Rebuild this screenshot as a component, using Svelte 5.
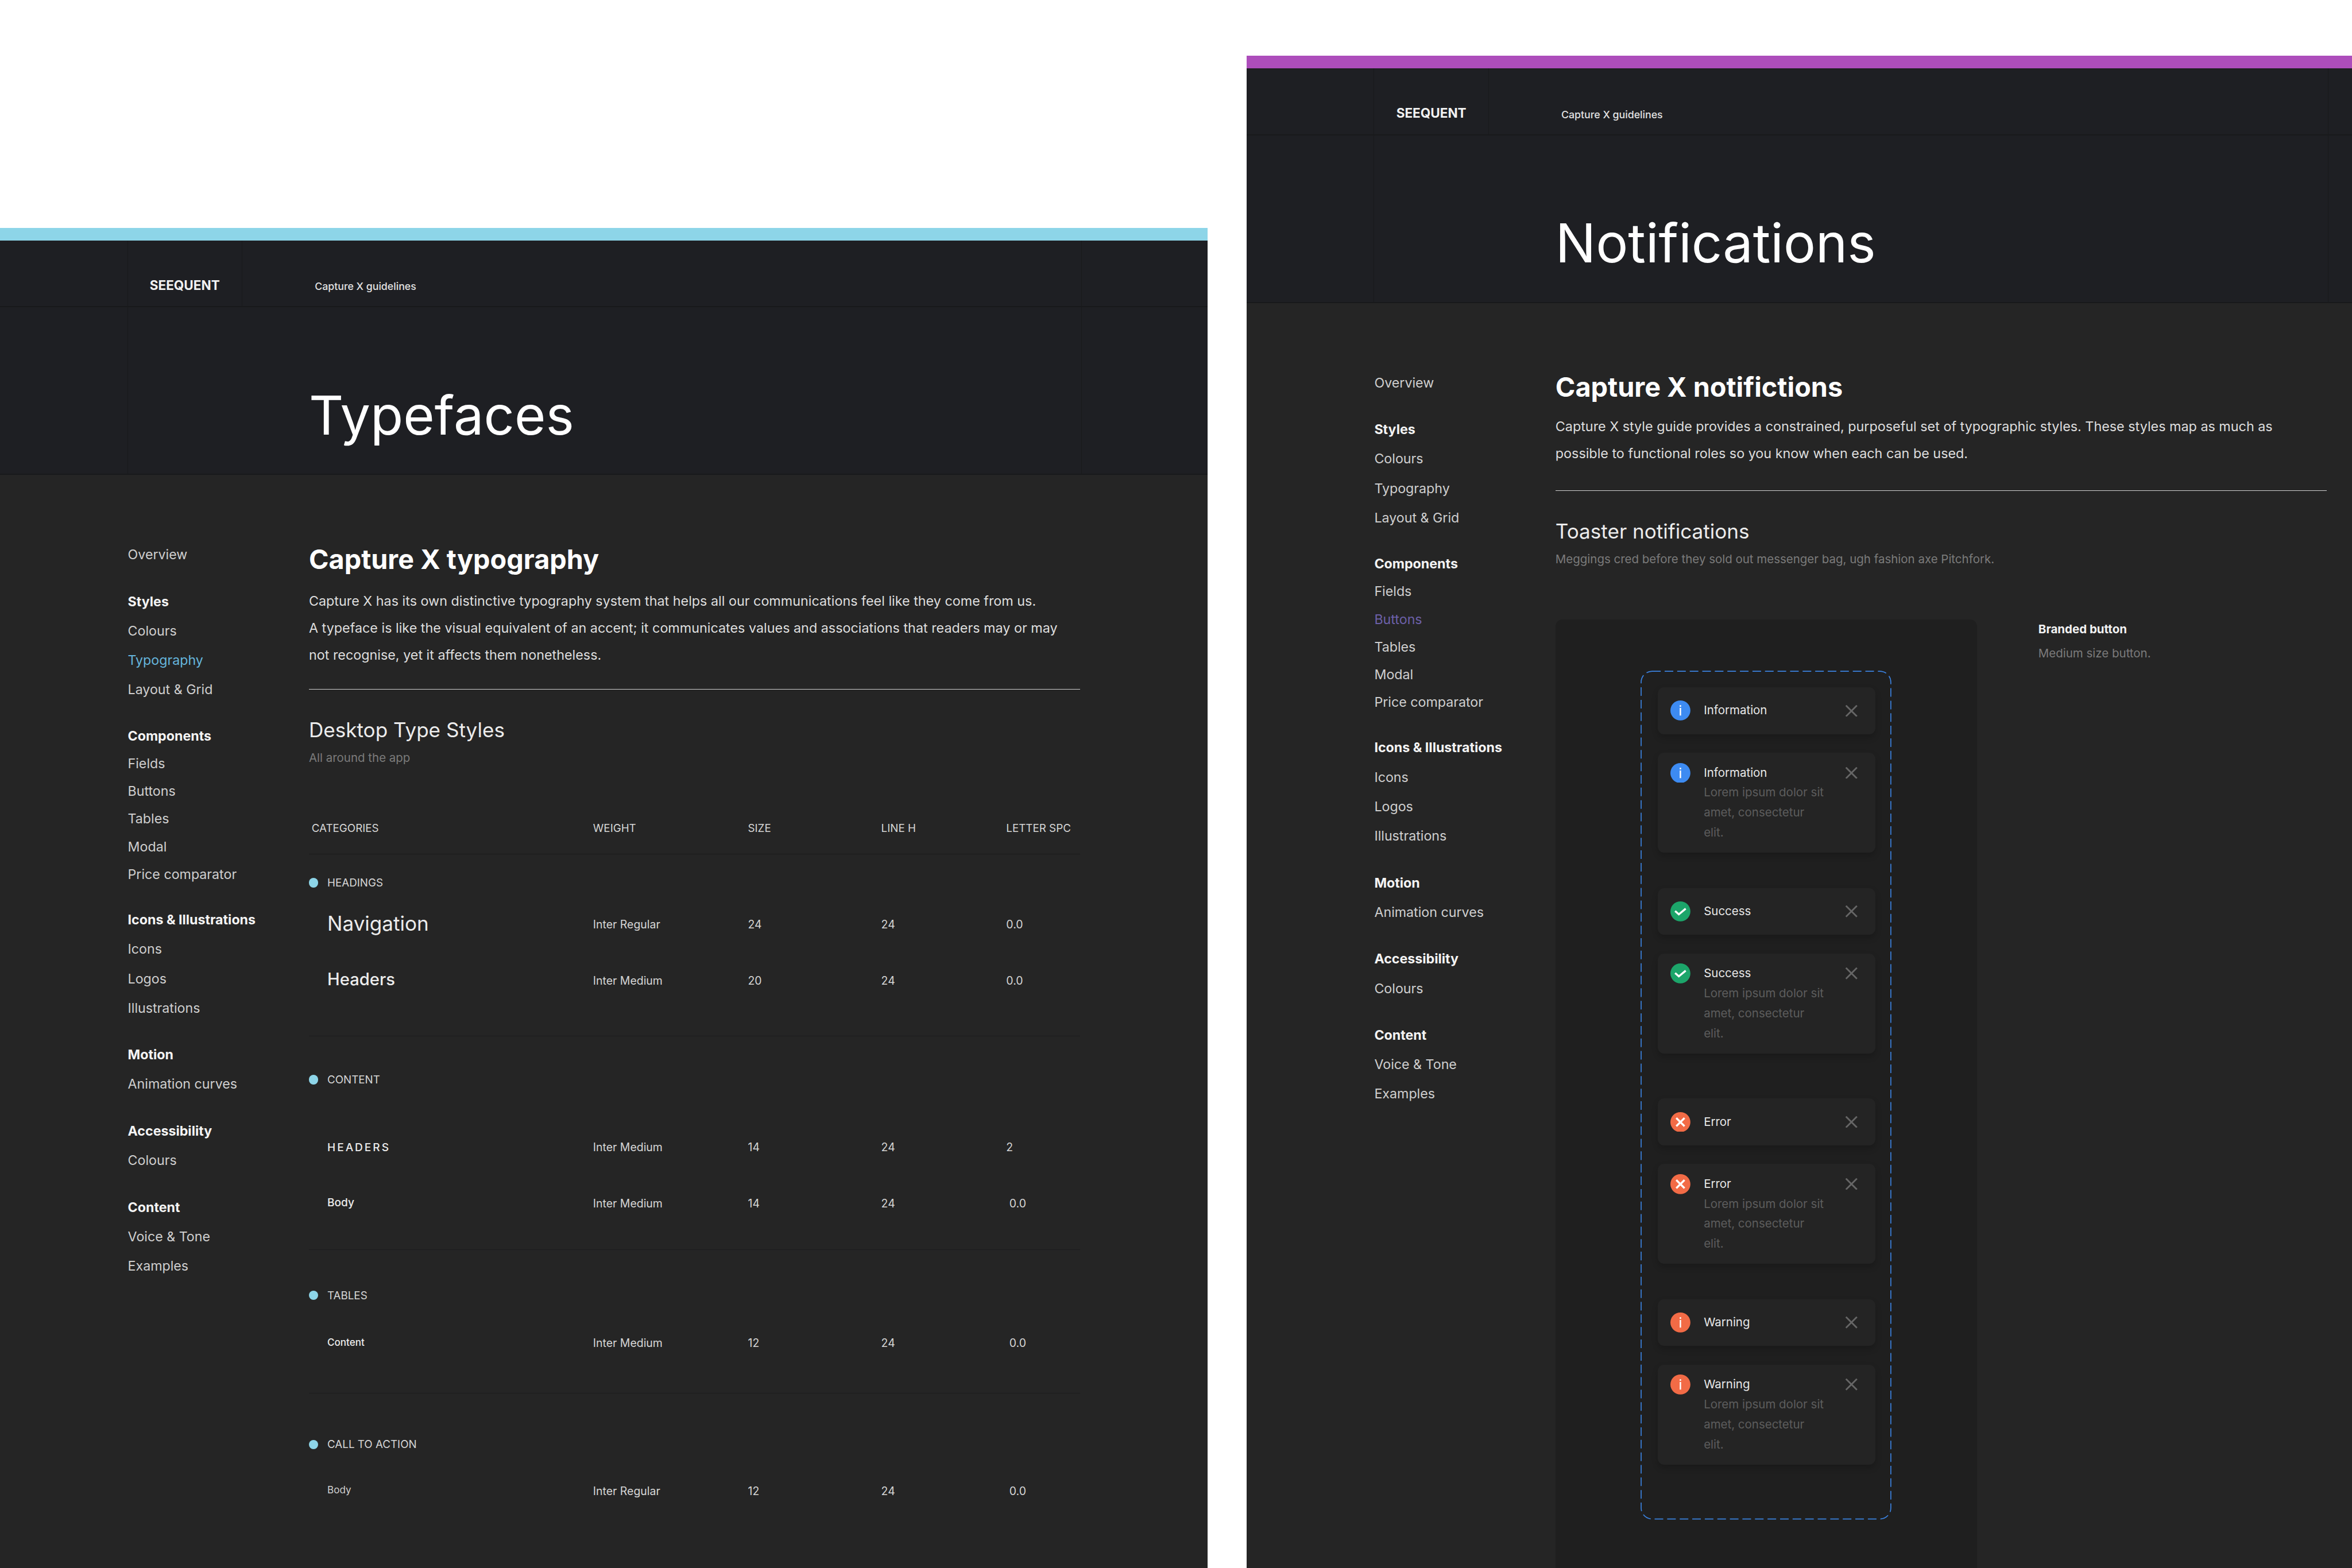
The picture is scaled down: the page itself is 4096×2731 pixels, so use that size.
<script>
  const sections = [
    { kind: 'headings', label: 'HEADINGS', rows: [
      { name: 'Navigation', style: 'nav-name', weight: 'Inter Regular', size: 24, line: 24, spc: '0.0' },
      { name: 'Headers', style: 'head-name', weight: 'Inter Medium', size: 20, line: 24, spc: '0.0' }
    ] },
    { kind: 'content', label: 'CONTENT', rows: [
      { name: 'HEADERS', style: 'caps-name', weight: 'Inter Medium', size: 14, line: 24, spc: '2' },
      { name: 'Body', style: 'body-name', weight: 'Inter Medium', size: 14, line: 24, spc: '0.0', nudge: true }
    ] },
    { kind: 'tables', label: 'TABLES', rows: [
      { name: 'Content', style: 'small-name', weight: 'Inter Medium', size: 12, line: 24, spc: '0.0', nudge: true }
    ] },
    { kind: 'cta', label: 'CALL TO ACTION', rows: [
      { name: 'Body', style: 'small-name light', weight: 'Inter Regular', size: 12, line: 24, spc: '0.0', nudge: true }
    ] }
  ];

  const navGroups = [
    { head: 'Styles', items: ['Colours', 'Typography', 'Layout & Grid'] },
    { head: 'Components', tight: true, items: ['Fields', 'Buttons', 'Tables', 'Modal', 'Price comparator'] },
    { head: 'Icons & Illustrations', items: ['Icons', 'Logos', 'Illustrations'] },
    { head: 'Motion', items: ['Animation curves'] },
    { head: 'Accessibility', items: ['Colours'] },
    { head: 'Content', items: ['Voice & Tone', 'Examples'] }
  ];

  const toasts = [
    { kind: 'info', title: 'Information' },
    { kind: 'success', title: 'Success' },
    { kind: 'error', title: 'Error' },
    { kind: 'warning', title: 'Warning' }
  ];
</script>

{#snippet top(title)}
  <div class="header">
    <div class="cell"></div>
    <div class="cell logo"><span>SEEQUENT</span></div>
    <div class="cell crumb"><span>Capture X guidelines</span></div>
    <div class="cell last"></div>
  </div>
  <div class="hero">
    <div class="cell"></div>
    <div class="cell hero-main"><h1>{title}</h1></div>
    <div class="cell last"></div>
  </div>
{/snippet}

{#snippet nav(active, cls)}
  <nav class="nav">
    <div class="nav-row">Overview</div>
    {#each navGroups as group}
      <div class="nav-group" class:tight={group.tight}>
        <div class="nav-row nav-head">{group.head}</div>
        {#each group.items as item}
          <div class="nav-row {item === active && group.head !== 'Accessibility' ? cls : ''}">{item}</div>
        {/each}
      </div>
    {/each}
  </nav>
{/snippet}

{#snippet icon(kind)}
  <svg class="ico" viewBox="0 0 51 51">
    <circle class={kind} cx="25.5" cy="25.5" r="25.5" />
    {#if kind === 'info' || kind === 'warning'}
      <rect x="23.7" y="12" width="3.6" height="4.2" fill="#fff" />
      <rect x="23.7" y="19" width="3.6" height="19.5" fill="#fff" />
    {:else if kind === 'success'}
      <path d="M12 24.5l9.5 8.5L39 18.5" fill="none" stroke="#fff" stroke-width="5" />
    {:else}
      <path d="M15 15l21 21M36 15L15 36" fill="none" stroke="#fff" stroke-width="5" />
    {/if}
  </svg>
{/snippet}

{#snippet closeX()}
  <svg class="close" viewBox="0 0 30 30">
    <path d="M1 1l28 28M29 1L1 29" fill="none" stroke="#666" stroke-width="4.2" />
  </svg>
{/snippet}

<div class="page">
  <section class="panel typefaces">
    <div class="bar"></div>
    {@render top('Typefaces')}
    <div class="body">
      {@render nav('Typography', 'active-blue')}
      <main class="main">
        <h2>Capture X typography</h2>
        <p class="lead">
          Capture X has its own distinctive typography system that helps all our communications feel like they come from us.<br />
          A typeface is like the visual equivalent of an accent; it communicates values and associations that readers may or may<br />
          not recognise, yet it affects them nonetheless.
        </p>
        <hr />
        <h3>Desktop Type Styles</h3>
        <p class="sub">All around the app</p>

        <div class="table-head tcols">
          <span class="first">CATEGORIES</span>
          <span>WEIGHT</span>
          <span>SIZE</span>
          <span>LINE H</span>
          <span>LETTER SPC</span>
        </div>
        {#each sections as sec}
          <div class="sec {sec.kind}">
            <div class="sec-label"><i class="dot"></i>{sec.label}</div>
            <div class="sec-rows">
              {#each sec.rows as row}
                <div class="row tcols">
                  <span class="name {row.style}">{row.name}</span>
                  <span>{row.weight}</span>
                  <span>{row.size}</span>
                  <span>{row.line}</span>
                  <span class:nudge={row.nudge}>{row.spc}</span>
                </div>
              {/each}
            </div>
          </div>
        {/each}
      </main>
    </div>
  </section>

  <section class="panel notifications">
    <div class="bar"></div>
    {@render top('Notifications')}
    <div class="body">
      {@render nav('Buttons', 'active-purple')}
      <main class="main">
        <h2>Capture X notifictions</h2>
        <p class="lead">
          Capture X style guide provides a constrained, purposeful set of typographic styles. These styles map as much as<br />
          possible to functional roles so you know when each can be used.
        </p>
        <hr />
        <h3>Toaster notifications</h3>
        <p class="sub">Meggings cred before they sold out messenger bag, ugh fashion axe Pitchfork.</p>

        <div class="demo">
          <div class="card">
            <div class="dashed">
              <svg class="dash-line" viewBox="0 0 640 2166">
                <rect x="1.5" y="1.5" width="637" height="2163" rx="28" />
              </svg>
              {#each toasts as t}
                <div class="toast-group {t.kind}">
                  <div class="toast short">
                    {@render icon(t.kind)}
                    <div class="toast-text"><div class="toast-title">{t.title}</div></div>
                    {@render closeX()}
                  </div>
                  <div class="toast long">
                    {@render icon(t.kind)}
                    <div class="toast-text">
                      <div class="toast-title">{t.title}</div>
                      <div class="toast-body">Lorem ipsum dolor sit<br />amet, consectetur<br />elit.</div>
                    </div>
                    {@render closeX()}
                  </div>
                </div>
              {/each}
            </div>
          </div>
          <div class="side">
            <div class="side-title">Branded button</div>
            <div class="side-sub">Medium size button.</div>
          </div>
        </div>
      </main>
    </div>
  </section>
</div>

<style>
  :global(body) {
    background: #fff;
  }

  /* everything below is in reference pixels, the zoom brings it to window size */
  .page {
    zoom: 0.68267;
    width: 6000px;
    height: 4000px;
    display: flex;
    align-items: flex-start;
    overflow: hidden;
    background: #fff;
    font-family: Inter, "Liberation Sans", sans-serif;
    color: #dcdcdc;
  }

  .panel {
    display: flex;
    flex-direction: column;
    background: #252525;
    flex: none;
  }
  .typefaces {
    width: 3080px;
    height: 3419px;
    margin-top: 581px;
    --accent: #8dd5e8;
  }
  .notifications {
    width: 2820px;
    height: 3858px;
    margin-top: 142px;
    margin-left: 100px;
    --accent: #ad4dbb;
  }

  .bar {
    height: 33px;
    background: var(--accent);
    flex: none;
  }

  .header,
  .hero {
    display: grid;
    background: #1e1f23;
    border-bottom: 3px solid #18191b;
    flex: none;
  }
  .header {
    grid-template-columns: 326px 292px 2142px 1fr;
    height: 170px;
    box-sizing: border-box;
  }
  .hero {
    grid-template-columns: 326px 2434px 1fr;
    height: 428px;
    box-sizing: border-box;
  }
  .cell {
    border-right: 2px solid #18191b;
    box-sizing: border-box;
  }
  .cell.last {
    border-right: 0;
  }
  .logo,
  .crumb {
    display: flex;
    align-items: center;
  }
  .logo {
    padding: 60px 0 0 56px;
    font-size: 33px;
    font-weight: 700;
    color: #f2f2f2;
  }
  .crumb {
    padding: 66px 0 0 185px;
    font-size: 26px;
    font-weight: 500;
    color: #e2e2e2;
  }
  .hero-main {
    padding: 206px 0 0 462px;
  }
  h1 {
    margin: 0;
    font-size: 137px;
    line-height: 140px;
    font-weight: 400;
    color: #fff;
  }

  .body {
    flex: 1;
    min-height: 0;
    display: flex;
    padding-left: 326px;
  }

  .nav {
    width: 462px;
    flex: none;
    padding-top: 167px;
    font-size: 34px;
    color: #cfcfcf;
    box-sizing: border-box;
  }
  .nav-row {
    height: 75px;
    line-height: 75px;
    white-space: nowrap;
  }
  .nav-group {
    margin-top: 44.5px;
  }
  .nav-group.tight .nav-row {
    height: 70.5px;
    line-height: 70.5px;
  }
  .nav-head {
    font-weight: 700;
    color: #f4f4f4;
  }
  .active-blue {
    color: #66b6dd;
  }
  .active-purple {
    color: #6c60a8;
  }

  .main {
    width: 1967px;
    flex: none;
    display: flex;
    flex-direction: column;
    padding-top: 175px;
  }
  h2 {
    margin: 0;
    font-size: 68.5px;
    line-height: 80px;
    font-weight: 700;
    color: #fff;
  }
  .lead {
    margin: 32px 0 0;
    font-size: 34.2px;
    line-height: 69px;
    white-space: nowrap;
    color: #dedede;
  }
  .notifications .lead {
    margin-top: 27px;
    line-height: 68px;
  }
  hr {
    width: 100%;
    margin: 52px 0 0;
    height: 2px;
    border: 0;
    background: #cfcfcf;
    flex: none;
  }
  .notifications hr {
    margin-top: 60px;
  }
  h3 {
    margin: 73px 0 0;
    font-size: 51.4px;
    line-height: 60px;
    font-weight: 400;
    color: #ececec;
  }
  .sub {
    margin: 20px 0 0;
    font-size: 30px;
    line-height: 40px;
    color: #7b7b7b;
  }

  .tcols {
    display: grid;
    grid-template-columns: 725px 395px 340px 319px 1fr;
    font-size: 28.5px;
    color: #d6d6d6;
  }
  .table-head {
    margin-top: 140px;
    padding-bottom: 46px;
    line-height: 40px;
    border-bottom: 2px solid #19191a;
    font-size: 27.5px;
  }
  .first {
    padding-left: 7px;
  }

  .sec {
    border-bottom: 2px solid #1c1c1d;
    flex: none;
  }
  .sec:last-child {
    border-bottom: 0;
  }
  .sec-label {
    display: flex;
    align-items: center;
    height: 40px;
    font-size: 27.5px;
    color: #d6d6d6;
  }
  .dot {
    width: 24px;
    height: 24px;
    margin-right: 23px;
    border-radius: 50%;
    background: #8dd5e8;
    flex: none;
  }
  .headings { padding: 52px 0 70px; }
  .content { padding: 90px 0 46px; }
  .tables { padding: 96px 0 55px; }
  .cta { padding: 111px 0 0; }
  .headings .sec-rows { margin-top: 15px; }
  .content .sec-rows { margin-top: 81px; }
  .tables .sec-rows { margin-top: 30px; }
  .cta .sec-rows { margin-top: 27px; }

  .row {
    height: 143px;
    align-items: center;
  }
  .nudge {
    padding-left: 8px;
  }
  .name {
    padding-left: 47px;
    color: #ececec;
  }
  .nav-name { font-size: 51.4px; margin-top: -6px; }
  .head-name { font-size: 42.8px; font-weight: 500; margin-top: -6px; }
  .caps-name { font-size: 28px; font-weight: 500; letter-spacing: 4.3px; }
  .body-name { font-size: 28px; font-weight: 500; margin-top: -6px; }
  .small-name { font-size: 25px; font-weight: 500; margin-top: -6px; }
  .small-name.light { font-weight: 400; color: #cfcfcf; }

  .demo {
    flex: 1;
    min-height: 0;
    display: flex;
    margin-top: 135px;
  }
  .card {
    width: 1075px;
    flex: none;
    padding-top: 130px;
    box-sizing: border-box;
    background: #1f1f1f;
    border-radius: 18px 18px 0 0;
  }
  .dashed {
    position: relative;
    width: 640px;
    height: 2166px;
    margin: 0 auto;
    padding: 43px 43px 0;
    box-sizing: border-box;
  }
  .dash-line {
    position: absolute;
    inset: 0;
    width: 640px;
    height: 2166px;
    fill: none;
    stroke: #3b82e0;
    stroke-width: 2.5;
    stroke-dasharray: 22 10;
  }

  .toast-group {
    display: flex;
    flex-direction: column;
    gap: 48px;
    margin-top: 90px;
  }
  .toast-group.info {
    margin-top: 0;
  }
  .toast-group.error {
    margin-top: 115px;
  }
  .toast {
    display: flex;
    align-items: flex-start;
    width: 555px;
    box-sizing: border-box;
    padding: 34px 45px 34px 33px;
    background: #242424;
    border-radius: 16px;
    box-shadow: 0 8px 16px rgba(0, 0, 0, 0.18);
  }
  .toast.long {
    padding-top: 25.5px;
    padding-bottom: 25.5px;
  }
  .ico {
    width: 51px;
    height: 51px;
    flex: none;
  }
  circle.info { fill: #3d8bf2; }
  circle.success { fill: #1ca56a; }
  circle.error, circle.warning { fill: #f26b46; }
  .toast-text {
    flex: 1;
    min-width: 0;
    padding-left: 34px;
    font-size: 30px;
    line-height: 51px;
  }
  .toast-title {
    color: #e8e8e8;
  }
  .toast-body {
    color: #5d5d5d;
    white-space: nowrap;
  }
  .close {
    width: 30px;
    height: 30px;
    margin-top: 10.5px;
    flex: none;
  }

  .side {
    margin-left: 157px;
    padding-top: 4px;
    font-size: 30px;
    line-height: 40px;
  }
  .side-title {
    font-weight: 700;
    color: #f2f2f2;
  }
  .side-sub {
    margin-top: 21px;
    color: #7b7b7b;
  }
</style>
